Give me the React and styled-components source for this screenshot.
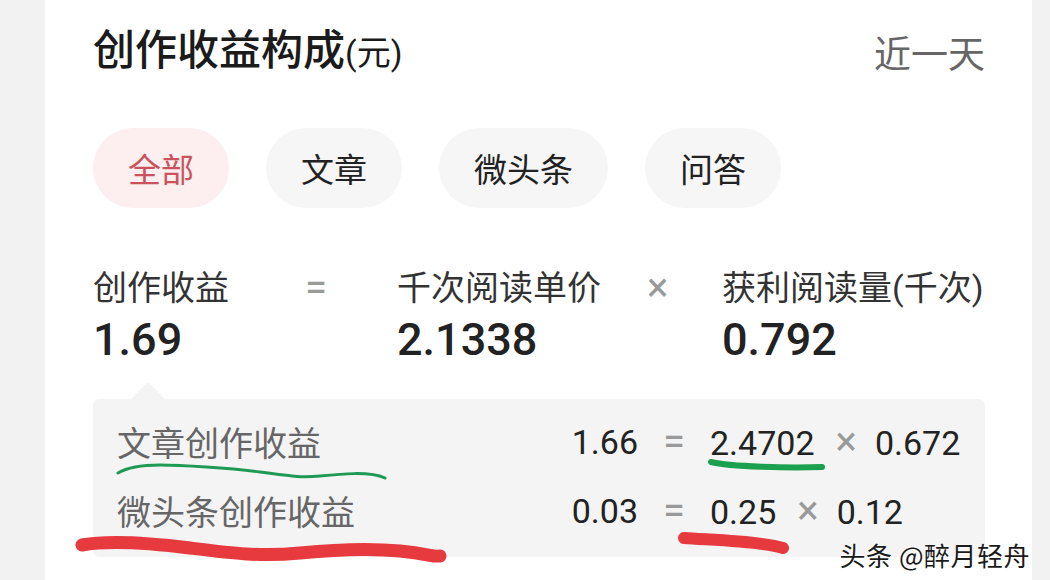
import React from 'react';
import styled, { createGlobalStyle } from 'styled-components';

const GlobalStyle = createGlobalStyle`
  html, body {
    margin: 0;
    padding: 0;
    background: #f2f2f2;
  }
  body {
    font-family: Roboto, "Noto Sans CJK SC", sans-serif;
  }
`;

const Page = styled.div`
  position: relative;
  width: 1050px;
  height: 580px;
  overflow: hidden;
  box-sizing: border-box;
  padding: 0 18px 0 45px;
  display: flex;
  background: #f2f2f2;
`;

const Card = styled.section`
  flex: 1;
  background: #fff;
  padding: 0 47px 0 48px;
  display: flex;
  flex-direction: column;
`;

const Header = styled.header`
  height: 104px;
  display: flex;
  align-items: center;
  justify-content: space-between;
`;

const Title = styled.h2`
  margin: 0;
  font-size: 42px;
  font-weight: 500;
  line-height: 50px;
  color: #1b1b1b;

  small {
    font-size: 34px;
    font-weight: 400;
  }
`;

const Range = styled.span`
  font-size: 37px;
  color: #666;
`;

const Tabs = styled.nav`
  display: flex;
  gap: 37px;
  margin-top: 24px;
`;

const Tab = styled.div`
  height: 80px;
  padding: 0 35px;
  border-radius: 40px;
  display: flex;
  align-items: center;
  font-size: 33px;
  background: ${(p) => (p.$active ? '#fdeef0' : '#f6f6f6')};
  color: ${(p) => (p.$active ? '#c9525c' : '#222')};
`;

const Formula = styled.div`
  display: grid;
  grid-template-columns: 212px 92px 250px 75px 1fr;
  margin-top: 58px;
`;

const Term = styled.div`
  display: flex;
  flex-direction: column;
  gap: 3px;
`;

const TermLabel = styled.span`
  font-size: 34px;
  line-height: 44px;
  color: #333;
  white-space: nowrap;
`;

const TermValue = styled.span`
  font-size: 45px;
  font-weight: 500;
  line-height: 54px;
  color: #222;
`;

const Op = styled.span`
  font-size: 40px;
  line-height: 44px;
  color: #9a9a9a;
`;

const Breakdown = styled.div`
  position: relative;
  margin-top: 32px;
  background: #f4f4f4;
  border-radius: 6px;
  padding: 8px 25px 12px 24px;

  &::before {
    content: '';
    position: absolute;
    left: 38px;
    top: -17px;
    border-left: 17px solid transparent;
    border-right: 17px solid transparent;
    border-bottom: 17px solid #f4f4f4;
  }
`;

const Row = styled.div`
  display: grid;
  grid-template-columns: 1fr 80px 72px 250px;
  height: 69px;
  align-items: center;
`;

const RowLabel = styled.span`
  font-size: 34px;
  color: #666;
`;

const Total = styled.span`
  text-align: right;
  font-size: 34px;
  color: #222;
`;

const Eq = styled.span`
  text-align: center;
  font-size: 40px;
  color: #999;
`;

const Expr = styled.span`
  font-size: 34px;
  color: #222;
  white-space: nowrap;

  i {
    font-style: normal;
    font-size: 40px;
    color: #9a9a9a;
    margin: 0 18px 0 21px;
  }
`;

const Marks = styled.svg`
  position: absolute;
  inset: 0;
  width: 1050px;
  height: 580px;
  pointer-events: none;
`;

const Watermark = styled.span`
  position: absolute;
  right: 20px;
  bottom: 11px;
  font-family: "Noto Sans CJK SC", sans-serif;
  font-size: 26px;
  line-height: 28px;
  letter-spacing: 0.5px;
  color: #1a1a1a;
  text-shadow: 0 0 2px #fff, 0 0 2px #fff, 0 0 3px #fff;
`;

const tabs = ['全部', '文章', '微头条', '问答'];

const rows = [
  { label: '文章创作收益', total: '1.66', price: '2.4702', reads: '0.672' },
  { label: '微头条创作收益', total: '0.03', price: '0.25', reads: '0.12' },
];

export default function App() {
  return (
    <>
      <GlobalStyle />
      <Page>
        <Card>
          <Header>
            <Title>
              创作收益构成<small>(元)</small>
            </Title>
            <Range>近一天</Range>
          </Header>

          <Tabs>
            {tabs.map((t, i) => (
              <Tab key={t} $active={i === 0}>
                {t}
              </Tab>
            ))}
          </Tabs>

          <Formula>
            <Term>
              <TermLabel>创作收益</TermLabel>
              <TermValue>1.69</TermValue>
            </Term>
            <Op>=</Op>
            <Term>
              <TermLabel>千次阅读单价</TermLabel>
              <TermValue>2.1338</TermValue>
            </Term>
            <Op>×</Op>
            <Term>
              <TermLabel>获利阅读量(千次)</TermLabel>
              <TermValue>0.792</TermValue>
            </Term>
          </Formula>

          <Breakdown>
            {rows.map((r) => (
              <Row key={r.label}>
                <RowLabel>{r.label}</RowLabel>
                <Total>{r.total}</Total>
                <Eq>=</Eq>
                <Expr>
                  {r.price}
                  <i>×</i>
                  {r.reads}
                </Expr>
              </Row>
            ))}
          </Breakdown>
        </Card>

        {/* hand-drawn highlights over the screenshot */}
        <Marks viewBox="0 0 1050 580" fill="none" strokeLinecap="round">
          <path
            d="M118 473 C128 467 140 465 160 465 S230 468 260 472 S300 478 320 476 S370 471 385 478"
            stroke="#1f9a55"
            strokeWidth="3"
          />
          <path d="M711 462 C730 467 790 468 822 467" stroke="#1aa04e" strokeWidth="6" />
          <path
            d="M82 545 C110 540 150 543 190 548 S260 557 300 553 S370 548 400 551 S432 557 440 556"
            stroke="#e63a3e"
            strokeWidth="13"
          />
          <path d="M684 538 C710 540 760 541 783 548" stroke="#e63a3e" strokeWidth="12" />
        </Marks>

        <Watermark>头条 @醉月轻舟</Watermark>
      </Page>
    </>
  );
}
